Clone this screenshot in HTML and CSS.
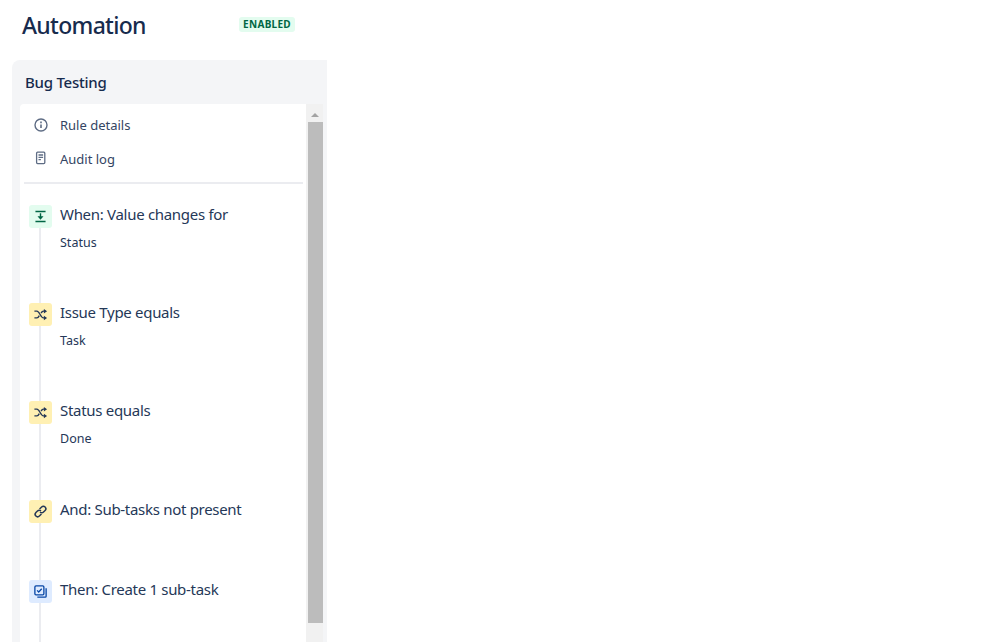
FILE: index.html
```html
<!DOCTYPE html>
<html lang="en">
<head>
<meta charset="utf-8">
<title>Automation</title>
<link rel="stylesheet" href="styles.css">
</head>
<body>
<main class="sidebar">
  <header class="page-head">
    <h1 class="page-title">Automation</h1>
    <span class="lozenge">ENABLED</span>
  </header>
  <section class="panel">
    <h2 class="rule-name">Bug Testing</h2>
    <div class="panel-body">
      <div class="card">
        <nav class="links">
          <a class="link">
            <svg class="link-icon" viewBox="0 0 16 16" fill="none" stroke="#5e6c84" stroke-width="1.4"><circle cx="8" cy="8" r="6"/><path d="M8 7.4v3.6" stroke-width="1.6"/><path d="M8 4.6v1.6" stroke-width="1.6"/></svg>
            <span>Rule details</span>
          </a>
          <a class="link">
            <svg class="link-icon" viewBox="0 0 16 16" fill="none" stroke="#5e6c84" stroke-width="1.3"><rect x="3.6" y="1.2" width="8.2" height="11.4" rx="1"/><path d="M5.5 4h4.6M5.5 6.4h4.6M5.5 8.6h2.4"/></svg>
            <span>Audit log</span>
          </a>
        </nav>
        <hr class="divider">
        <ol class="steps">
          <li class="step step-tall">
            <div class="rail">
              <span class="badge badge-green">
                <svg viewBox="0 0 16 16" fill="none" stroke="#006644" stroke-width="1.5"><path d="M2.6 2.6h10.8M2.6 13.4h10.8M8 4.6v4.4"/><path d="M4.8 7.8h6.4L8 11.4z" fill="#006644" stroke="none"/></svg>
              </span>
              <span class="line"></span>
            </div>
            <div class="step-text">
              <div class="step-title">When: Value changes for</div>
              <div class="step-sub">Status</div>
            </div>
          </li>
          <li class="step step-tall">
            <div class="rail">
              <span class="badge badge-yellow">
                <svg viewBox="0 0 16 16" fill="none" stroke="#253858" stroke-width="1.5"><path d="M1.5 4.4h2.6c3 0 4 7.2 7 7.2H13"/><path d="M1.5 11.6h2.6c1.1 0 1.9-1 2.6-2.4M8.6 6.4c.7-1.1 1.4-2 2.5-2H13"/><path d="M11.6 2 15 4.4 11.6 6.8zM11.6 9.2 15 11.6 11.6 14z" fill="#253858" stroke="none"/></svg>
              </span>
              <span class="line"></span>
            </div>
            <div class="step-text">
              <div class="step-title">Issue Type equals</div>
              <div class="step-sub">Task</div>
            </div>
          </li>
          <li class="step step-taller">
            <div class="rail">
              <span class="badge badge-yellow">
                <svg viewBox="0 0 16 16" fill="none" stroke="#253858" stroke-width="1.5"><path d="M1.5 4.4h2.6c3 0 4 7.2 7 7.2H13"/><path d="M1.5 11.6h2.6c1.1 0 1.9-1 2.6-2.4M8.6 6.4c.7-1.1 1.4-2 2.5-2H13"/><path d="M11.6 2 15 4.4 11.6 6.8zM11.6 9.2 15 11.6 11.6 14z" fill="#253858" stroke="none"/></svg>
              </span>
              <span class="line"></span>
            </div>
            <div class="step-text">
              <div class="step-title">Status equals</div>
              <div class="step-sub">Done</div>
            </div>
          </li>
          <li class="step step-short">
            <div class="rail">
              <span class="badge badge-yellow">
                <svg viewBox="0 0 16 16" fill="none" stroke="#253858" stroke-width="1.6"><path d="M7 5.4 9.2 3.2a2.6 2.6 0 0 1 3.7 3.7l-1.7 1.7a2.6 2.6 0 0 1-3.7 0"/><path d="M9 10.6l-2.2 2.2a2.6 2.6 0 0 1-3.7-3.7l1.7-1.7a2.6 2.6 0 0 1 3.7 0"/></svg>
              </span>
              <span class="line"></span>
            </div>
            <div class="step-text">
              <div class="step-title">And: Sub-tasks not present</div>
            </div>
          </li>
          <li class="step step-short">
            <div class="rail">
              <span class="badge badge-blue">
                <svg viewBox="0 0 16 16" fill="none" stroke="#0747a6" stroke-width="1.4"><rect x="2" y="2" width="9.6" height="9.6" rx="1.2"/><path d="M4.4 6.8l1.7 1.7 3.2-3.4"/><path d="M14 4.6v8.4a1 1 0 0 1-1 1H4.6"/></svg>
              </span>
              <span class="line"></span>
            </div>
            <div class="step-text">
              <div class="step-title">Then: Create 1 sub-task</div>
            </div>
          </li>
        </ol>
      </div>
      <div class="scrollbar">
        <span class="scroll-up"></span>
        <span class="scroll-thumb"></span>
      </div>
    </div>
  </section>
</main>
</body>
</html>
```
FILE: styles.css
```css
html, body {
  margin: 0;
  height: 100%;
  overflow: hidden;
  background: #fff;
}
body {
  font-family: "Noto Sans", "Open Sans", "Liberation Sans", sans-serif;
  color: #172b4d;
}
.sidebar {
  width: 315px;
  margin-left: 12px;
}
.page-head {
  height: 60px;
  box-sizing: border-box;
  padding: 9px 32px 0 10px;
  display: flex;
  justify-content: space-between;
  align-items: flex-start;
}
.page-title {
  margin: 0;
  font-size: 23px;
  line-height: 32px;
  font-weight: 500;
  letter-spacing: -0.7px;
  color: #172b4d;
}
.lozenge {
  margin-top: 8px;
  padding: 0 4px;
  height: 15px;
  line-height: 15px;
  font-size: 10px;
  font-weight: 700;
  letter-spacing: 0.3px;
  border-radius: 3px;
  background: #e3fcef;
  color: #006644;
}
.panel {
  background: #f4f5f7;
  border-radius: 8px 0 0 0;
  padding: 0 0 0 8px;
  height: 582px;
  box-sizing: border-box;
  display: flex;
  flex-direction: column;
}
.rule-name {
  margin: 0;
  height: 44px;
  box-sizing: border-box;
  padding: 12px 0 0 5px;
  font-size: 15px;
  line-height: 20px;
  font-weight: 500;
  letter-spacing: -0.25px;
  color: #172b4d;
}
.panel-body {
  flex: 1;
  min-height: 0;
  display: flex;
  padding-right: 4px;
}
.card {
  flex: 1;
  min-width: 0;
  background: #fff;
  border-radius: 4px 0 0 0;
  overflow: hidden;
  padding: 4px 3px 0 4px;
}
.links {
  display: flex;
  flex-direction: column;
}
.link {
  height: 34px;
  display: flex;
  align-items: center;
  gap: 11px;
  padding-left: 9px;
  font-size: 13px;
  color: #344563;
}
.link-icon {
  width: 16px;
  height: 16px;
  flex: none;
}
.divider {
  border: 0;
  height: 2px;
  margin: 6px 0 21px;
  background: #ebecf0;
}
.steps {
  list-style: none;
  margin: 0;
  padding: 0 0 0 5px;
}
.step {
  display: flex;
  gap: 8px;
}
.step-tall { height: 98px; }
.step-taller { height: 99px; }
.step-short { height: 80px; }
.rail {
  width: 23px;
  flex: none;
  display: flex;
  flex-direction: column;
  align-items: center;
}
.badge {
  width: 23px;
  height: 23px;
  flex: none;
  border-radius: 3px;
  display: flex;
  align-items: center;
  justify-content: center;
}
.badge svg {
  width: 15px;
  height: 15px;
}
.badge-green { background: #e3fcef; }
.badge-yellow { background: #fff0b3; }
.badge-blue { background: #deebff; }
.line {
  flex: 1;
  width: 2px;
  margin-right: 1px;
  background: #ebecf0;
}
.step-text {
  min-width: 0;
}
.step-title {
  font-size: 15px;
  line-height: 19px;
  letter-spacing: -0.3px;
  color: #253858;
}
.step-sub {
  margin-top: 10px;
  font-size: 12.5px;
  line-height: 18px;
  color: #253858;
}
.scrollbar {
  width: 17px;
  flex: none;
  background: #f1f1f1;
  display: flex;
  flex-direction: column;
  align-items: flex-end;
}
.scroll-up {
  width: 15px;
  height: 18px;
  flex: none;
  position: relative;
}
.scroll-up::after {
  content: "";
  position: absolute;
  left: 3px;
  top: 9px;
  border-left: 4px solid transparent;
  border-right: 4px solid transparent;
  border-bottom: 4px solid #a3a3a3;
}
.scroll-thumb {
  width: 15px;
  height: 501px;
  flex: none;
  background: #bcbcbc;
}
```
